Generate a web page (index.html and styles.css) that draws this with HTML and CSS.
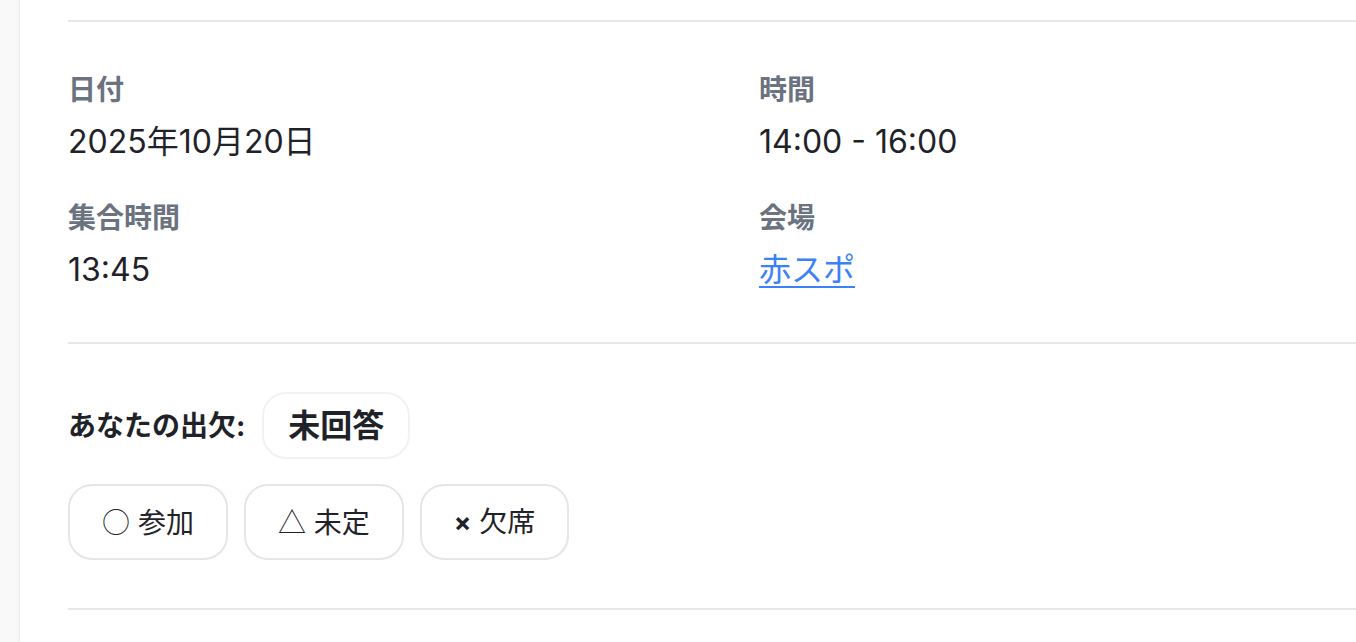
FILE: index.html
```html
<!DOCTYPE html>
<html lang="ja">
<head>
<meta charset="utf-8">
<title>イベント詳細</title>
<link rel="stylesheet" href="styles.css">
</head>
<body>
<main class="card">
  <section class="details">
    <div class="field">
      <div class="label">日付</div>
      <div class="value">2025年10月20日</div>
    </div>
    <div class="field">
      <div class="label">時間</div>
      <div class="value">14:00 - 16:00</div>
    </div>
    <div class="field">
      <div class="label">集合時間</div>
      <div class="value">13:45</div>
    </div>
    <div class="field">
      <div class="label">会場</div>
      <div class="value"><a class="venue" href="#">赤スポ</a></div>
    </div>
  </section>
  <section class="attendance">
    <div class="status-row">
      <span class="status-label">あなたの出欠:</span>
      <span class="status-badge">未回答</span>
    </div>
    <div class="choices">
      <button class="choice" type="button"><span class="mark">○</span> 参加</button>
      <button class="choice" type="button"><span class="mark">△</span> 未定</button>
      <button class="choice" type="button"><span class="mark mark-x">×</span> 欠席</button>
    </div>
  </section>
  <section class="after"></section>
</main>
</body>
</html>
```
FILE: styles.css
```css
html, body {
  margin: 0;
  padding: 0;
  overflow: hidden;
  height: 100%;
}
body {
  background: #f9f9fa;
  font-family: "Inter", "Noto Sans CJK JP", sans-serif;
  color: #1f2329;
}
.card {
  margin-left: 20px;
  width: 1446px;
  min-height: 100%;
  background: #ffffff;
  box-shadow: -1px 0 2px rgba(0, 0, 0, 0.07);
  padding: 20px 48px 0;
  box-sizing: border-box;
}
.details {
  border-top: 2px solid #e6e7eb;
  padding: 48px 0;
  display: grid;
  grid-template-columns: 1fr 1fr;
  column-gap: 32px;
  row-gap: 32px;
}
.field {
  display: flex;
  flex-direction: column;
  gap: 8px;
}
.label {
  font-size: 28px;
  line-height: 40px;
  font-weight: 600;
  color: #6b7280;
}
.value {
  font-size: 32px;
  line-height: 48px;
  color: #1f2329;
}
.venue {
  color: #3b82f6;
  text-decoration: underline;
  text-decoration-thickness: 2px;
  text-underline-offset: 5px;
}
.attendance {
  border-top: 2px solid #e6e7eb;
  padding: 48px 0;
  display: flex;
  flex-direction: column;
  gap: 25px;
}
.status-row {
  display: flex;
  align-items: center;
  gap: 17px;
}
.status-label {
  font-size: 28px;
  line-height: 40px;
  font-weight: 700;
  color: #1f2329;
}
.status-badge {
  font-size: 32px;
  line-height: 47px;
  font-weight: 700;
  padding: 8px 24px;
  border: 2px solid #f1f2f4;
  border-radius: 24px;
  color: #1f2329;
  background: #ffffff;
}
.choices {
  display: flex;
  gap: 16px;
}
.choice {
  font-family: inherit;
  font-size: 28px;
  line-height: 38px;
  padding: 16px 32px;
  border: 2px solid #e5e6e9;
  border-radius: 24px;
  background: #ffffff;
  color: #1f2329;
}
.mark {
  font-family: "Noto Sans CJK JP", sans-serif;
  font-weight: 300;
}
.mark-x {
  font-family: "Inter", sans-serif;
  font-weight: 700;
  font-size: 26px;
}
.after {
  border-top: 2px solid #e6e7eb;
  height: 60px;
}
```
